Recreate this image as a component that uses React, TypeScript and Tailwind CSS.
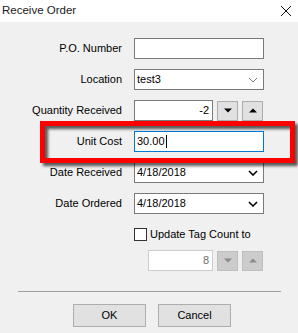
import React from 'react'

function Chevron({ dark }: { dark?: boolean }) {
  return (
    <svg width="10" height="6" viewBox="0 0 10 6" className="mr-[5px]">
      <path
        d="M1 1 L5 5 L9 1"
        fill="none"
        stroke={dark ? '#000' : '#7a7a7a'}
        strokeWidth={dark ? 1.6 : 1}
      />
    </svg>
  )
}

function SpinButton({ up, disabled }: { up?: boolean; disabled?: boolean }) {
  const color = disabled ? '#8a8a8a' : '#000'
  return (
    <div
      className={
        'w-[21px] h-[20px] border flex items-center justify-center ' +
        (disabled ? 'bg-[#cccccc] border-[#bfbfbf]' : 'bg-[#e1e1e1] border-[#adadad]')
      }
    >
      <svg width="8" height="5" viewBox="0 0 8 5">
        {up ? <polygon points="0,4.5 8,4.5 4,0.5" fill={color} /> : <polygon points="0,0.5 8,0.5 4,4.5" fill={color} />}
      </svg>
    </div>
  )
}

function Row({ label, children }: { label: string; children: React.ReactNode }) {
  return (
    <div className="flex items-center h-[21px]">
      <div className="w-[122px] text-right">{label}</div>
      <div className="ml-[12px] flex items-center">{children}</div>
    </div>
  )
}

export default function App() {
  return (
    <div
      className="relative w-[298px] h-[333px] overflow-hidden bg-[#f0f0f0] text-[11px] text-black"
      style={{ fontFamily: '"Liberation Sans", Arial, sans-serif' }}
    >
      <div className="h-[22px] bg-white flex items-center justify-between pl-[2px] pr-[7px]">
        <span className="text-[11.5px] text-[#1a1a1a]">Receive Order</span>
        <svg width="10" height="10" viewBox="0 0 10 10">
          <path d="M0 0 L10 10 M10 0 L0 10" stroke="#111" strokeWidth="1" />
        </svg>
      </div>

      <div className="flex flex-col gap-[10px] mt-[16px]">
        <Row label="P.O. Number">
          <div className="w-[130px] h-[21px] bg-white border border-[#7a7a7a]" />
        </Row>
        <Row label="Location">
          <div className="w-[130px] h-[21px] bg-white border border-[#7a7a7a] flex items-center justify-between pl-[2px]">
            <span>test3</span>
            <Chevron />
          </div>
        </Row>
        <Row label="Quantity Received">
          <div className="w-[79px] h-[21px] bg-white border border-[#7a7a7a] flex items-center justify-end pr-[3px]">
            -2
          </div>
          <div className="ml-[4px]">
            <SpinButton />
          </div>
          <div className="ml-[4px]">
            <SpinButton up />
          </div>
        </Row>
        <Row label="Unit Cost">
          <div className="w-[130px] h-[21px] bg-white border border-[#0078d7] flex items-center pl-[2px]">
            <span>30.00</span>
            <span className="w-px h-[13px] bg-black ml-px" />
          </div>
        </Row>
        <Row label="Date Received">
          <div className="w-[130px] h-[21px] bg-white border border-[#7a7a7a] flex items-center justify-between pl-[2px]">
            <span>4/18/2018</span>
            <Chevron dark />
          </div>
        </Row>
        <Row label="Date Ordered">
          <div className="w-[130px] h-[21px] bg-white border border-[#7a7a7a] flex items-center justify-between pl-[2px]">
            <span>4/18/2018</span>
            <Chevron dark />
          </div>
        </Row>
      </div>

      <div className="flex items-center ml-[134px] mt-[14px] h-[13px]">
        <div className="w-[13px] h-[13px] bg-white border border-[#333]" />
        <span className="ml-[3px]">Update Tag Count to</span>
      </div>

      <div className="flex items-center ml-[148px] mt-[9px]">
        <div className="w-[65px] h-[21px] bg-white border border-[#cccccc] flex items-center justify-end pr-[3px] text-[#6d6d6d]">
          8
        </div>
        <div className="ml-[4px]">
          <SpinButton disabled />
        </div>
        <div className="ml-[4px]">
          <SpinButton up disabled />
        </div>
      </div>

      <div className="mx-[18px] w-[263px] mt-[20px] h-px bg-[#a0a0a0]" />

      <div className="flex ml-[73px] gap-[12px] mt-[12px]">
        <button className="w-[73px] h-[23px] bg-[#e1e1e1] border border-[#adadad]">OK</button>
        <button className="w-[73px] h-[23px] bg-[#e1e1e1] border border-[#adadad]">Cancel</button>
      </div>

      <div className="absolute left-[40px] top-[121px] w-[255px] h-[42px] border-[5px] border-[#ff0000] drop-shadow-[3px_3px_1.5px_rgba(0,0,0,0.65)]" />
    </div>
  )
}
